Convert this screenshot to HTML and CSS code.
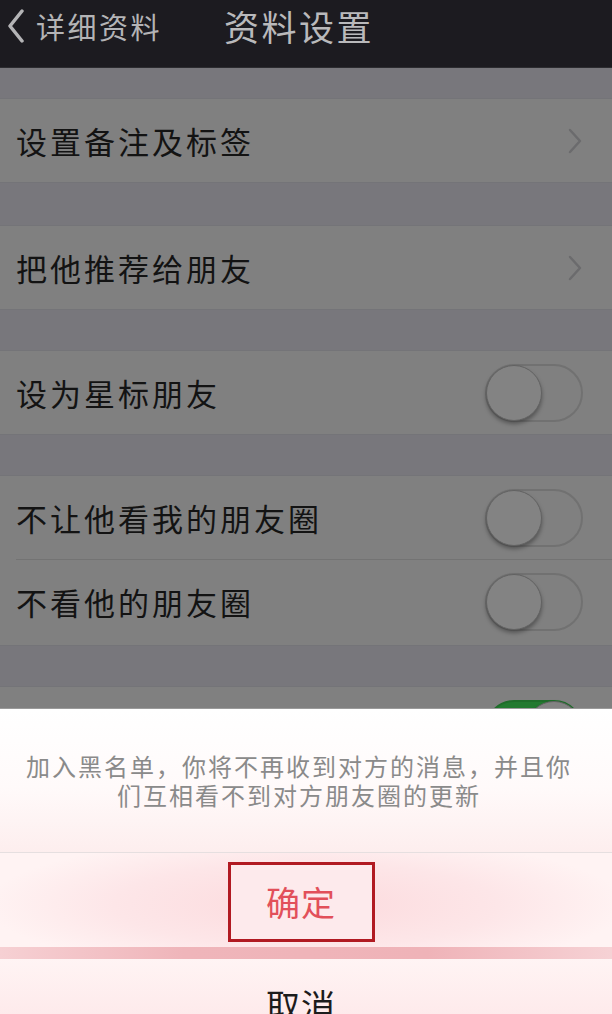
FILE: index.html
```html
<!DOCTYPE html>
<html lang="zh-CN">
<head>
<meta charset="utf-8">
<title>资料设置</title>
<link rel="stylesheet" href="styles.css">
</head>
<body>
<div class="screen">
  <header class="navbar">
    <div class="back">
      <svg class="back-icon" width="18" height="34" viewBox="0 0 18 34"><path d="M15 2 L3 17 L15 32" fill="none" stroke="#b4b4b6" stroke-width="3.5" stroke-linecap="round" stroke-linejoin="round"/></svg>
      <span class="back-text">详细资料</span>
    </div>
    <h1 class="title">资料设置</h1>
  </header>

  <main class="content">
    <section class="group group-first">
      <div class="row">
        <span class="label">设置备注及标签</span>
        <svg class="chevron" width="16" height="26" viewBox="0 0 16 26"><path d="M3 2 L13 13 L3 24" fill="none" stroke="#6b6b6d" stroke-width="2.5" stroke-linecap="round" stroke-linejoin="round"/></svg>
      </div>
    </section>

    <section class="group">
      <div class="row">
        <span class="label">把他推荐给朋友</span>
        <svg class="chevron" width="16" height="26" viewBox="0 0 16 26"><path d="M3 2 L13 13 L3 24" fill="none" stroke="#6b6b6d" stroke-width="2.5" stroke-linecap="round" stroke-linejoin="round"/></svg>
      </div>
    </section>

    <section class="group">
      <div class="row">
        <span class="label">设为星标朋友</span>
        <span class="switch"><span class="knob"></span></span>
      </div>
    </section>

    <section class="group">
      <div class="row">
        <span class="label">不让他看我的朋友圈</span>
        <span class="switch"><span class="knob"></span></span>
      </div>
      <div class="row row-sep">
        <span class="label">不看他的朋友圈</span>
        <span class="switch"><span class="knob"></span></span>
      </div>
    </section>

    <section class="group">
      <div class="row">
        <span class="label"></span>
        <span class="switch switch-on"><span class="knob"></span></span>
      </div>
    </section>
  </main>

  <div class="sheet">
    <div class="sheet-message">
      <p class="message"><span class="msg-line">加入黑名单，你将不再收到对方的消息，并且你</span><span class="msg-line">们互相看不到对方朋友圈的更新</span></p>
    </div>
    <div class="sheet-confirm">
      <span class="confirm-box">确定</span>
    </div>
    <div class="sheet-gap"></div>
    <div class="sheet-cancel">
      <span class="cancel">取消</span>
    </div>
  </div>
</div>
</body>
</html>
```

FILE: styles.css
```css
html, body {
  margin: 0;
  padding: 0;
}

body {
  width: 612px;
  height: 1014px;
  overflow: hidden;
  background: #78777c;
  font-family: "Noto Sans CJK SC", "Noto Sans", sans-serif;
}

.screen {
  position: relative;
  width: 612px;
  height: 1014px;
  overflow: hidden;
  background: #78777c;
}

.navbar {
  height: 68px;
  box-sizing: border-box;
  background: #1c1b20;
  border-bottom: 1px solid #2c2c30;
  display: flex;
  align-items: flex-start;
  padding-left: 7px;
}

.back {
  display: flex;
  align-items: center;
  height: 52px;
  gap: 11px;
}

.back-icon {
  display: block;
}

.back-text {
  font-size: 29px;
  letter-spacing: 2.5px;
  line-height: 52px;
  color: #b4b4b6;
}

.title {
  margin: 0 0 0 62px;
  font-size: 35px;
  font-weight: normal;
  letter-spacing: 2.5px;
  line-height: 52px;
  color: #b9b9bb;
}

.content {
  padding-top: 30px;
  display: flex;
  flex-direction: column;
  gap: 40px;
}

.group {
  background: #808080;
  border-top: 1px solid #747478;
  border-bottom: 1px solid #747478;
}

.group-first {
  margin-bottom: 2px;
}

.row {
  height: 83px;
  display: flex;
  align-items: center;
  justify-content: space-between;
  padding: 0 29px 0 16px;
  position: relative;
}

.row-sep {
  height: 86px;
}

.row-sep::before {
  content: "";
  position: absolute;
  top: 0;
  left: 16px;
  right: 0;
  height: 1px;
  background: #737373;
}

.label {
  font-size: 31px;
  letter-spacing: 3px;
  line-height: 40px;
  color: #131313;
}

.chevron {
  display: block;
}

.switch {
  position: relative;
  width: 98px;
  height: 58px;
  box-sizing: border-box;
  border: 2px solid #717171;
  border-radius: 30px;
  background: #808080;
}

.knob {
  position: absolute;
  top: -1px;
  left: -1px;
  width: 56px;
  height: 56px;
  box-sizing: border-box;
  border-radius: 50%;
  background: #838383;
  border: 1px solid #626262;
  box-shadow: 0 3px 4px rgba(0, 0, 0, 0.35);
}

.switch-on {
  background: #237a30;
  border-color: #1f6d2a;
}

.switch-on .knob {
  left: auto;
  right: -1px;
}

.sheet {
  position: absolute;
  top: 709px;
  left: 0;
  width: 612px;
  height: 340px;
  display: flex;
  flex-direction: column;
  background: #ffffff;
  box-shadow: 0 -1px 0 #9a9a9a;
}

.sheet-message {
  height: 144px;
  display: flex;
  align-items: center;
  justify-content: center;
  padding-right: 14px;
  box-sizing: border-box;
  border-bottom: 1px solid #e6dfe0;
  background: linear-gradient(180deg, #ffffff 0%, #fffafa 55%, #fdeeee 100%);
}

.message {
  margin: 0;
  font-size: 24px;
  letter-spacing: 2px;
  text-align: center;
  color: #8a8a8a;
}

.msg-line {
  display: block;
  height: 29px;
  line-height: 29px;
  overflow: visible;
}

.sheet-confirm {
  height: 95px;
  display: flex;
  align-items: flex-start;
  justify-content: center;
  padding-right: 10px;
  background: radial-gradient(ellipse 320px 70px at 50% 55%, #fcdadd 0%, #fde6e8 60%, #fff3f3 100%);
}

.confirm-box {
  margin-top: 9px;
  width: 147px;
  height: 80px;
  box-sizing: border-box;
  border: 3px solid #b11a22;
  display: flex;
  align-items: center;
  justify-content: center;
  font-size: 34px;
  letter-spacing: 1px;
  color: #e2505a;
  background: #fdeaec;
}

.sheet-gap {
  height: 12px;
  background: linear-gradient(90deg, #f6d0d3 0%, #efb5ba 30%, #efb3b8 70%, #f6d2d5 100%);
}

.sheet-cancel {
  height: 90px;
  display: flex;
  align-items: center;
  justify-content: center;
  padding-right: 10px;
  background: linear-gradient(180deg, #fff4f4 0%, #fde4e6 100%);
}

.cancel {
  font-size: 34px;
  letter-spacing: 1px;
  color: #1c1c1c;
}
```
